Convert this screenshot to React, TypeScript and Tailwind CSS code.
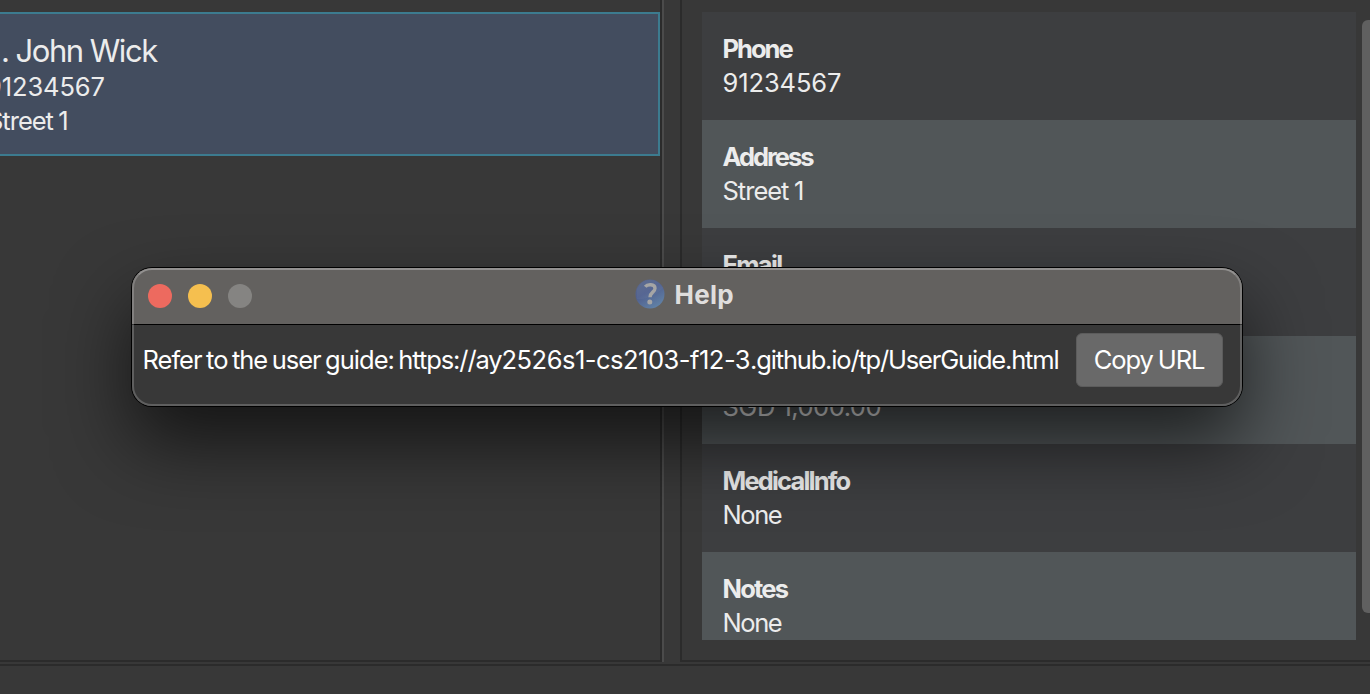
import React from "react";

type Field = { label: string; value: string; labelClass: string; valueClass: string };

const fields: Field[] = [
  { label: "Phone", value: "91234567", labelClass: "tracking-[-2px]", valueClass: "tracking-[-0.1px]" },
  { label: "Address", value: "Street 1", labelClass: "tracking-[-2px]", valueClass: "tracking-[-1px] [word-spacing:-0.6px]" },
  { label: "Email", value: "john@example.com", labelClass: "tracking-[-1.7px]", valueClass: "tracking-[-0.7px]" },
  { label: "Income", value: "SGD 1,000.00", labelClass: "tracking-[-1.5px]", valueClass: "tracking-[-0.5px]" },
  { label: "MedicalInfo", value: "None", labelClass: "tracking-[-1.85px]", valueClass: "tracking-[-1.4px]" },
  { label: "Notes", value: "None", labelClass: "tracking-[-1.8px]", valueClass: "tracking-[-1.4px]" },
];

function PersonList() {
  return (
    <section className="h-[662px] w-[662px] shrink-0 border-b-2 border-r-2 border-[#2b2b2b] pt-3">
      <div className="h-36 w-[660px] overflow-hidden border-2 border-l-0 border-[#3c7b8f] bg-[#434d5f] pt-[18px] text-[#ececec]">
        <div className="flex h-[38px] items-center whitespace-pre pl-px text-[31px] tracking-[-1.4px] [word-spacing:-0.4px]">
          <span>. John Wick</span>
        </div>
        <div className="-ml-[14px] flex h-[34px] items-center text-[25.5px] tracking-[-0.1px]">91234567</div>
        <div className="-ml-[13px] flex h-[34px] items-center text-[25.5px] tracking-[-1px] [word-spacing:-0.9px]">
          Street 1
        </div>
      </div>
    </section>
  );
}

function Details() {
  return (
    <section className="flex h-[662px] grow border-b-2 border-l-2 border-[#2b2b2b] pl-5 pt-3">
      <div className="h-[628px] w-[654px] overflow-hidden">
        {fields.map((f) => (
          <div
            key={f.label}
            className="h-[108px] bg-[#3d3e40] pl-[20.5px] pt-5 text-[25.5px] text-[#ececec] even:bg-[#515658]"
          >
            <div className={"flex h-[34px] items-center font-bold " + f.labelClass}>{f.label}</div>
            <div className={"flex h-[34px] items-center " + f.valueClass}>{f.value}</div>
          </div>
        ))}
      </div>
      <div className="ml-1.5 mt-2 h-[593px] w-2 rounded-l-[6px] bg-[#606060]" />
    </section>
  );
}

function HelpIcon() {
  return (
    <svg width="30" height="30" viewBox="0 0 30 30">
      <defs>
        <linearGradient id="orb" x1="0" y1="0" x2="0.6" y2="1">
          <stop offset="0" stopColor="#5b6889" />
          <stop offset="0.5" stopColor="#50608f" />
          <stop offset="1" stopColor="#6080a5" />
        </linearGradient>
      </defs>
      <circle cx="15" cy="15" r="14.5" fill="url(#orb)" />
      <path d="M2 20C9 21 20 17 28 9A14 14 0 0 0 2 10Z" fill="#7787a5" opacity="0.18" />
      <path d="M10.2 7.8C12.4 5 19.9 4.7 20 9.3C20.1 13.2 15 13.2 15 18.2" fill="none" stroke="#a5a5a5" strokeWidth="3.4" />
      <circle cx="14.8" cy="23" r="2.5" fill="#a5a5a5" />
    </svg>
  );
}

function HelpWindow() {
  return (
    <div className="absolute left-[132px] top-[268px] h-[138px] w-[1110px] overflow-visible rounded-[20px] shadow-[0_0_0_1px_#000,0_36px_76px_rgba(0,0,0,0.64)]">
      <div className="h-full overflow-hidden rounded-[20px] bg-[#383838]">
        <header className="relative flex h-14 items-center bg-[#63615f] pl-4">
          <div className="flex gap-4">
            <i className="size-6 rounded-full bg-[#ed6a5f]" />
            <i className="size-6 rounded-full bg-[#f5bf4f]" />
            <i className="size-6 rounded-full bg-[#858482]" />
          </div>
          <div className="ml-[382.5px] flex items-center gap-[10px] pb-1 text-[#dfdedd]">
            <HelpIcon />
            <span className="text-[26px] font-bold tracking-[0.3px]">Help</span>
          </div>
        </header>
        <main className="flex h-[82px] items-start border-t border-black pl-[10.5px] pt-2 text-[25.5px] text-white">
          <p className="h-[54px] w-[933px] whitespace-nowrap leading-[54px] tracking-[-1px] [word-spacing:-1.7px]">
            Refer to the user guide: <span className="tracking-[-1.1px]">https://ay</span>
            <span className="tracking-[-0.5px]">2526s1-cs2103-f12-3</span>
            <span className="tracking-[-1.18px]">.github.io/tp/UserGuide.html</span>
          </p>
          <button className="h-[54px] w-[147px] rounded-[6px] border border-[#5c5c5c] bg-[#696969] tracking-[-1.1px] [word-spacing:-1px]">
            Copy URL
          </button>
        </main>
      </div>
      <div className="pointer-events-none absolute inset-0 rounded-[20px] border-2 border-white/20 border-t-white/30" />
    </div>
  );
}

export default function App() {
  return (
    <div className="relative h-[694px] w-[1370px] overflow-hidden bg-[#383838] font-['Inter',sans-serif]">
      <div className="flex h-[664px]">
        <PersonList />
        <div className="h-[662px] w-[18px] shrink-0 border-l-2 border-[#4b4b4b]" />
        <Details />
      </div>
      <div className="h-[30px] border-t-2 border-[#2b2b2b]" />
      <HelpWindow />
    </div>
  );
}
